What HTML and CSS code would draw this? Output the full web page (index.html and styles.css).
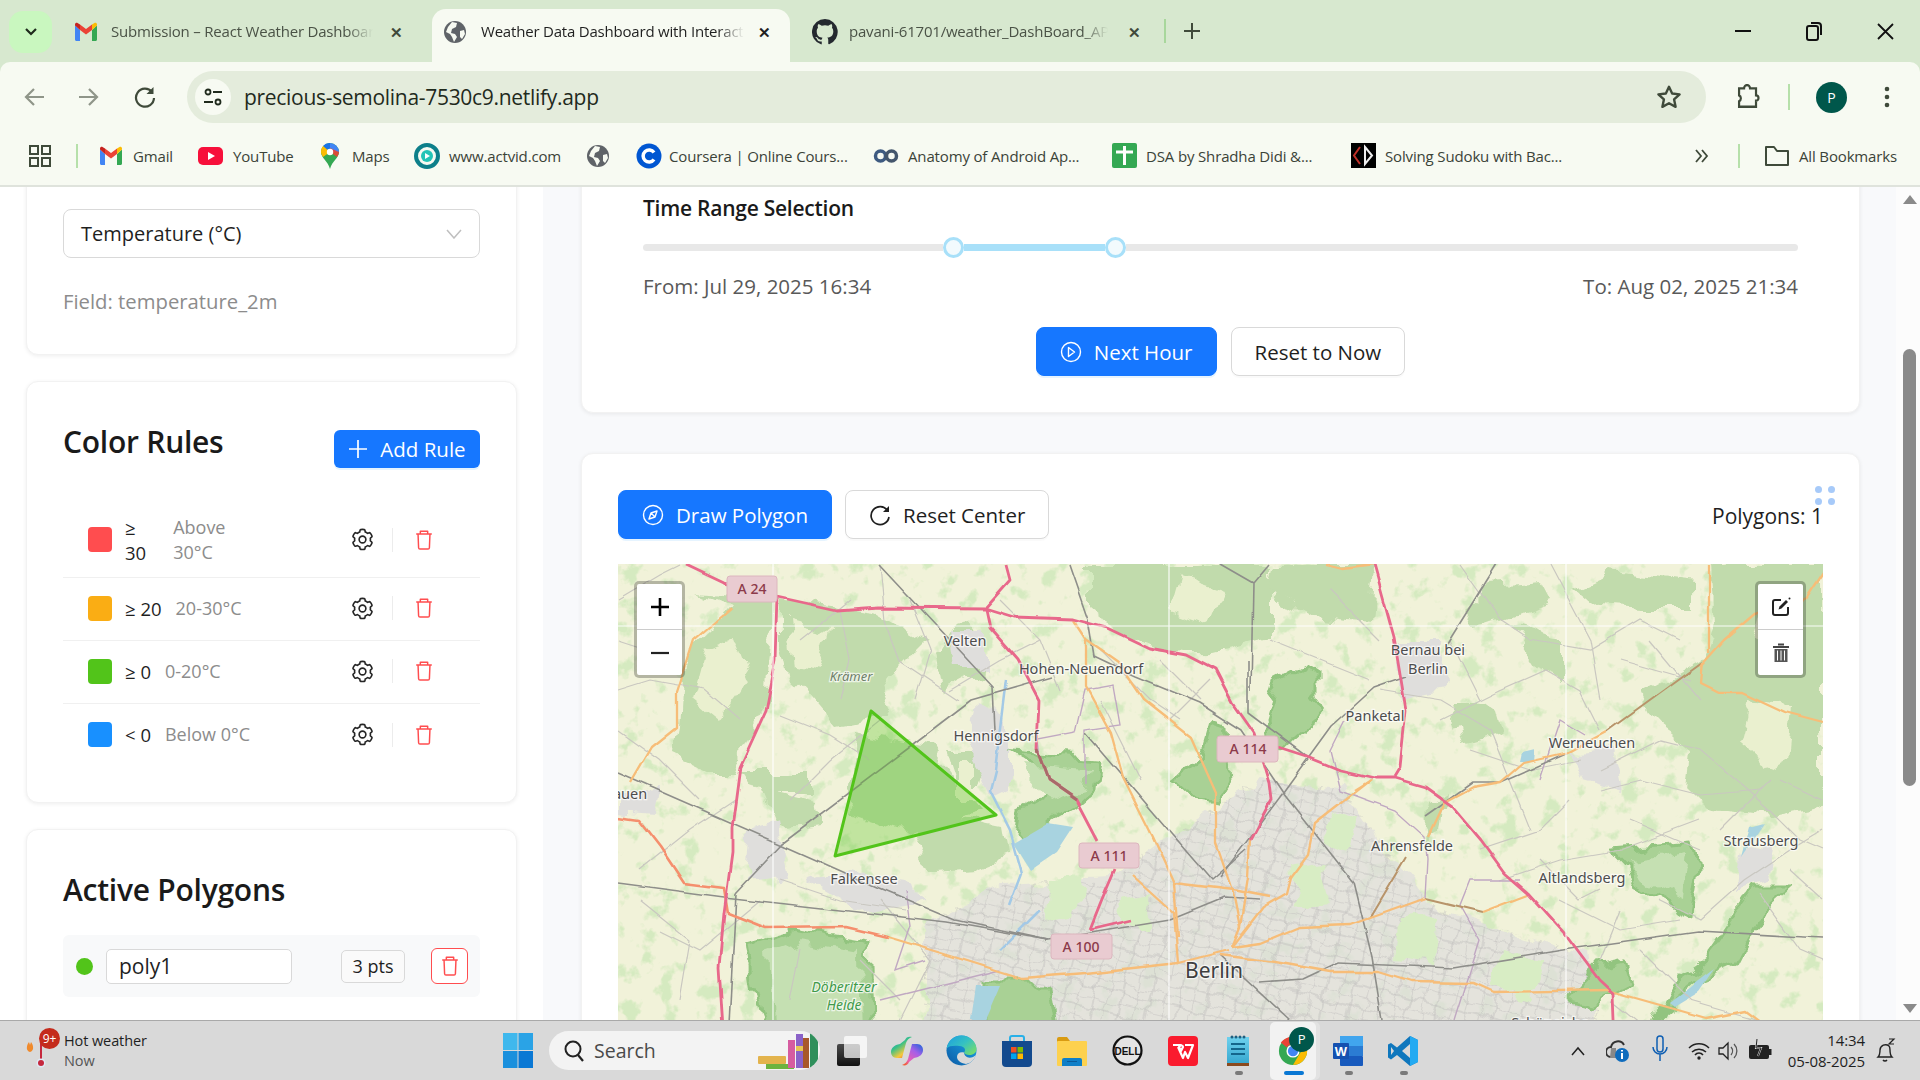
FILE: index.html
```html
<!DOCTYPE html>
<html lang="en">
<head>
    <meta charset="UTF-8">
    <meta name="viewport" content="width=device-width, initial-scale=1.0">
    <title>Weather Data Dashboard with Interactive Map</title>
    <link rel="stylesheet" href="styles.css">
</head>
<body>
    <!-- shared icons -->
    <svg class="icon-defs" aria-hidden="true">
        <symbol id="i-gear" viewBox="0 0 1024 1024">
            <path fill="none" stroke="currentColor" stroke-width="72" d="M924.8 625.7l-65.5-56c3.1-19 4.7-38.4 4.7-57.8s-1.6-38.8-4.7-57.8l65.5-56a32 32 0 0 0 9.3-35.2l-.9-2.6a443.7 443.7 0 0 0-79.7-137.9l-1.8-2.1a32.1 32.1 0 0 0-35.1-9.5l-81.3 28.9c-30-24.6-63.5-44-99.7-57.6l-15.7-85a32 32 0 0 0-25.8-25.7l-2.7-.5c-52.1-9.4-106.9-9.4-159 0l-2.7.5a32 32 0 0 0-25.8 25.7l-15.8 85.4a351.9 351.9 0 0 0-99 57.4l-81.9-29.1a32 32 0 0 0-35.1 9.5l-1.8 2.1a446 446 0 0 0-79.7 137.9l-.9 2.6c-4.5 12.5-.8 26.5 9.3 35.2l66.3 56.6c-3.1 18.8-4.6 38-4.6 57.1 0 19.2 1.5 38.4 4.6 57.1L99 625.5a32 32 0 0 0-9.3 35.2l.9 2.6c18.1 50.4 44.9 96.9 79.7 137.9l1.8 2.1a32.1 32.1 0 0 0 35.1 9.5l81.9-29.1c29.8 24.5 63.1 43.9 99 57.4l15.8 85.4a32 32 0 0 0 25.8 25.7l2.7.5a449.4 449.4 0 0 0 159 0l2.7-.5a32 32 0 0 0 25.8-25.7l15.7-85a350 350 0 0 0 99.7-57.6l81.3 28.9a32 32 0 0 0 35.1-9.5l1.8-2.1c34.8-41.1 61.6-87.5 79.7-137.9l.9-2.6c4.5-12.3.8-26.3-9.3-35z"/>
            <circle cx="512" cy="512" r="150" fill="none" stroke="currentColor" stroke-width="72"/>
        </symbol>
        <symbol id="i-trash" viewBox="0 0 24 24">
            <path fill="none" stroke="currentColor" stroke-width="1.6" stroke-linejoin="round" d="M3.5 5.5h17M8 5.5V2.5h8v3M5.5 5.5l.6 15a1.5 1.5 0 0 0 1.5 1.4h8.8a1.5 1.5 0 0 0 1.5-1.4l.6-15"/>
        </symbol>
        <symbol id="i-globe" viewBox="0 0 24 24">
            <circle cx="12" cy="12" r="11" fill="#5f6368"/>
            <path fill="#f7faf2" d="M9 2l5 1-1 4-4 2-1 4 4 1 2 3-3 5-2-5-2-3-4-2 2-5zM17 11l4-1 1 4-3 5-2-2z"/>
        </symbol>
        <symbol id="i-gmail" viewBox="0 0 24 24">
            <path fill="#4285f4" d="M1 5.5v14c0 .8.6 1.5 1.5 1.5H6V10z"/>
            <path fill="#34a853" d="M23 5.5v14c0 .8-.6 1.5-1.5 1.5H18V10z"/>
            <path fill="#ea4335" d="M6 10V4.5L12 9l6-4.5V10l-6 4.5z"/>
            <path fill="#fbbc04" d="M18 4.5l2.5-1.6c1-.6 2.5.1 2.5 1.6v1L18 10z"/>
            <path fill="#c5221f" d="M6 4.5L3.5 2.900C2.5 2.3 1 3 1 4.5v1L6 10z"/>
        </symbol>
    </svg>

    <div class="browser">
        <div class="tab-strip">
            <div class="tab-search"><svg width="14" height="10" viewBox="0 0 14 10"><path d="M2 2l5 5 5-5" fill="none" stroke="#1f2a1c" stroke-width="2.2"/></svg></div>
            <div class="tab tab-one">
                <svg class="tab-icon" width="24" height="24"><use href="#i-gmail"/></svg>
                <span class="tab-title">Submission – React Weather Dashboard</span>
                <span class="tab-close">✕</span>
            </div>
            <div class="tab tab-active">
                <svg class="tab-icon" width="24" height="24"><use href="#i-globe"/></svg>
                <span class="tab-title">Weather Data Dashboard with Interactive</span>
                <span class="tab-close">✕</span>
            </div>
            <div class="tab tab-three">
                <svg class="tab-icon" width="26" height="26" viewBox="0 0 16 16"><path fill="#24292f" d="M8 0a8 8 0 0 0-2.5 15.6c.4.1.5-.2.5-.4v-1.400c-2.2.5-2.7-1-2.7-1-.4-.9-.9-1.200-.9-1.200-.7-.5.1-.5.1-.5.8.1 1.200.8 1.200.8.7 1.200 1.900.9 2.300.7.1-.5.3-.9.5-1.100-1.800-.2-3.600-.9-3.600-4 0-.9.3-1.600.8-2.100-.1-.2-.4-1 .1-2.100 0 0 .7-.2 2.200.8a7.600 7.600 0 0 1 4 0c1.500-1 2.200-.8 2.200-.8.4 1.100.2 1.900.1 2.100.5.6.8 1.300.8 2.100 0 3.100-1.900 3.700-3.700 3.900.3.3.6.8.6 1.500v2.200c0 .2.1.5.6.4A8 8 0 0 0 8 0z"/></svg>
                <span class="tab-title">pavani-61701/weather_DashBoard_API</span>
                <span class="tab-close">✕</span>
            </div>
            <span class="tab-divider"></span>
            <svg class="tab-new" width="18" height="18" viewBox="0 0 18 18"><path d="M9 1v16M1 9h16" stroke="#3f4a3a" stroke-width="2"/></svg>
            <div class="window-btns">
                <svg width="16" height="16" viewBox="0 0 16 16"><path d="M0 8h16" stroke="#111" stroke-width="2"/></svg>
                <svg width="16" height="20" viewBox="0 0 16 20"><rect x="1" y="5" width="11" height="14" rx="2" fill="none" stroke="#111" stroke-width="2"/><path d="M5 2h7a3 3 0 0 1 3 3v9" fill="none" stroke="#111" stroke-width="2"/></svg>
                <svg width="17" height="17" viewBox="0 0 17 17"><path d="M1 1l15 15M16 1L1 16" stroke="#111" stroke-width="1.8"/></svg>
            </div>
        </div>

        <div class="toolbar">
            <svg class="nav-btn" width="22" height="20" viewBox="0 0 22 20"><path d="M21 10H3M11 2l-8 8 8 8" fill="none" stroke="#8f9589" stroke-width="2.2"/></svg>
            <svg class="nav-btn nav-forward" width="22" height="20" viewBox="0 0 22 20"><path d="M1 10h18M11 2l8 8-8 8" fill="none" stroke="#8f9589" stroke-width="2.2"/></svg>
            <svg class="nav-btn nav-reload" width="22" height="22" viewBox="0 0 22 22"><path d="M18 6a9 9 0 1 0 2 6" fill="none" stroke="#3f4a3a" stroke-width="2.2"/><path d="M19.5 1v7h-7" fill="#3f4a3a"/></svg>
            <div class="url-bar">
                <span class="site-info"><svg width="20" height="20" viewBox="0 0 20 20"><circle cx="5" cy="5" r="2.5" fill="none" stroke="#1f2a1c" stroke-width="1.8"/><path d="M10 5h9M1 15h9" stroke="#1f2a1c" stroke-width="1.8"/><circle cx="15" cy="15" r="2.5" fill="none" stroke="#1f2a1c" stroke-width="1.8"/></svg></span>
                <span class="url-text">precious-semolina-7530c9.netlify.app</span>
                <svg class="url-star" width="26" height="26" viewBox="0 0 24 24"><path d="M12 2.5l2.900 6.300 6.900.8-5.100 4.700 1.400 6.800-6.100-3.400-6.100 3.400 1.400-6.800-5.100-4.700 6.900-.8z" fill="none" stroke="#3f4a3a" stroke-width="2.2" stroke-linejoin="round"/></svg>
            </div>
            <svg class="ext-btn" width="26" height="26" viewBox="0 0 24 24"><path d="M3 4h5a3 3 0 0 1 6 0h6v6.5a2.5 2.5 0 0 1 0 5V21H3v-5a3 3 0 0 0 0-5.500z" transform="translate(1 0) scale(.92 1)" fill="none" stroke="#3f4a3a" stroke-width="2.2"/></svg>
            <span class="toolbar-divider"></span>
            <span class="avatar">P</span>
            <svg class="more-btn" width="6" height="24" viewBox="0 0 6 24"><circle cx="3" cy="4" r="2.3" fill="#3f4a3a"/><circle cx="3" cy="12" r="2.3" fill="#3f4a3a"/><circle cx="3" cy="20" r="2.3" fill="#3f4a3a"/></svg>
        </div>

        <div class="bookmarks">
            <svg class="bm-apps" width="24" height="24" viewBox="0 0 24 24"><g fill="none" stroke="#3f4a3a" stroke-width="2"><rect x="2" y="2" width="8" height="8"/><rect x="14" y="2" width="8" height="8"/><rect x="2" y="14" width="8" height="8"/><rect x="14" y="14" width="8" height="8"/></g></svg>
            <span class="bm-divider"></span>
            <div class="bm bm-gmail"><svg width="24" height="24"><use href="#i-gmail"/></svg><span>Gmail</span></div>
            <div class="bm bm-youtube"><svg width="25" height="24" viewBox="0 0 25 24"><rect y="3" width="25" height="18" rx="5" fill="#f70f3a"/><path d="M10 8l7 4-7 4z" fill="#fff"/></svg><span>YouTube</span></div>
            <div class="bm bm-maps"><svg width="20" height="26" viewBox="0 0 20 26"><path d="M10 0a9 9 0 0 1 9 9c0 6-7 9-9 17-2-8-9-11-9-17a9 9 0 0 1 9-9z" fill="#34a853"/><path d="M3 3a9 9 0 0 1 7-3v9z" fill="#1a73e8"/><path d="M10 0a9 9 0 0 1 9 9h-9z" fill="#4285f4"/><path d="M1 9a9 9 0 0 1 2-6l7 6-7 5c-1-2-2-3-2-5z" fill="#fbbc04"/><path d="M19 9c0 2-1 3-2 5l-7-5V5z" fill="#ea4335" opacity=".9"/><circle cx="10" cy="9" r="3.2" fill="#fff"/></svg><span>Maps</span></div>
            <div class="bm bm-actvid"><svg width="26" height="26" viewBox="0 0 26 26"><circle cx="13" cy="13" r="11" fill="none" stroke="#0d7f8a" stroke-width="4"/><circle cx="13" cy="13" r="6" fill="#24c4b6"/><path d="M11 10l5 3-5 3z" fill="#fff"/></svg><span>www.actvid.com</span></div>
            <div class="bm bm-globe"><svg width="24" height="24"><use href="#i-globe"/></svg></div>
            <div class="bm bm-coursera"><svg width="26" height="26" viewBox="0 0 26 26"><circle cx="13" cy="13" r="12.5" fill="#0056d2"/><path d="M18 9.5a6 6 0 1 0 0 7" fill="none" stroke="#fff" stroke-width="3.5"/></svg><span>Coursera | Online Cours...</span></div>
            <div class="bm bm-anatomy"><svg width="26" height="16" viewBox="0 0 26 16"><circle cx="7.5" cy="8" r="5" fill="none" stroke="#3d5a80" stroke-width="3.5"/><circle cx="18.5" cy="8" r="5" fill="none" stroke="#44566c" stroke-width="3.5"/></svg><span>Anatomy of Android Ap...</span></div>
            <div class="bm bm-dsa"><svg width="25" height="25" viewBox="0 0 25 25"><rect width="25" height="25" rx="2" fill="#34a853"/><path d="M12.5 3v19M4 9h17" stroke="#fff" stroke-width="3"/></svg><span>DSA by Shradha Didi &amp;...</span></div>
            <div class="bm bm-solving"><svg width="25" height="25" viewBox="0 0 25 25"><rect width="25" height="25" fill="#000"/><path d="M9 4l-6 8.5L9 21" fill="none" stroke="#c03028" stroke-width="2"/><path d="M14 4l7 8.5L14 21z" fill="none" stroke="#eee" stroke-width="2"/></svg><span>Solving Sudoku with Bac...</span></div>
            <svg class="bm-more" width="14" height="14" viewBox="0 0 14 14"><path d="M1 1l5 6-5 6M7 1l5 6-5 6" fill="none" stroke="#3f4a3a" stroke-width="1.8"/></svg>
            <span class="bm-divider bm-divider-end"></span>
            <div class="bm bm-all"><svg width="26" height="24" viewBox="0 0 26 24"><path d="M2 21V3h8l3 4h11v14z" fill="none" stroke="#3f4a3a" stroke-width="2" stroke-linejoin="round"/></svg><span>All Bookmarks</span></div>
        </div>
    </div>

    <div class="page">
        <aside class="sidebar">
            <section class="card card-layer">
                <div class="select-box">
                    <span>Temperature (°C)</span>
                    <svg width="16" height="10" viewBox="0 0 16 10"><path d="M1 1l7 8 7-8" fill="none" stroke="#bfbfbf" stroke-width="1.5"/></svg>
                </div>
                <p class="field-note">Field: temperature_2m</p>
            </section>

            <section class="card card-rules">
                <div class="rules-head">
                    <h2>Color Rules</h2>
                    <button class="btn-add"><svg width="20" height="20" viewBox="0 0 20 20"><path d="M10 1v18M1 10h18" stroke="#fff" stroke-width="1.7"/></svg>Add Rule</button>
                </div>
                <div class="rule-row rule-row-tall">
                    <span class="swatch swatch-red"></span>
                    <span class="rule-op rule-op-wrap">≥<br>30</span>
                    <span class="rule-label rule-label-wrap">Above<br>30°C</span>
                    <div class="rule-actions">
                        <svg class="act-gear" width="23" height="23"><use href="#i-gear"/></svg><span class="act-sep"></span><svg class="act-trash" width="22" height="22"><use href="#i-trash"/></svg>
                    </div>
                </div>
                <div class="rule-row">
                    <span class="swatch swatch-orange"></span>
                    <span class="rule-op">≥ 20</span>
                    <span class="rule-label">20-30°C</span>
                    <div class="rule-actions">
                        <svg class="act-gear" width="23" height="23"><use href="#i-gear"/></svg><span class="act-sep"></span><svg class="act-trash" width="22" height="22"><use href="#i-trash"/></svg>
                    </div>
                </div>
                <div class="rule-row">
                    <span class="swatch swatch-green"></span>
                    <span class="rule-op">≥ 0</span>
                    <span class="rule-label">0-20°C</span>
                    <div class="rule-actions">
                        <svg class="act-gear" width="23" height="23"><use href="#i-gear"/></svg><span class="act-sep"></span><svg class="act-trash" width="22" height="22"><use href="#i-trash"/></svg>
                    </div>
                </div>
                <div class="rule-row rule-row-last">
                    <span class="swatch swatch-blue"></span>
                    <span class="rule-op">&lt; 0</span>
                    <span class="rule-label">Below 0°C</span>
                    <div class="rule-actions">
                        <svg class="act-gear" width="23" height="23"><use href="#i-gear"/></svg><span class="act-sep"></span><svg class="act-trash" width="22" height="22"><use href="#i-trash"/></svg>
                    </div>
                </div>
            </section>

            <section class="card card-polys">
                <h2>Active Polygons</h2>
                <div class="poly-item">
                    <span class="poly-dot"></span>
                    <div class="poly-name">poly1</div>
                    <span class="poly-pts">3 pts</span>
                    <button class="poly-del"><svg width="22" height="22"><use href="#i-trash"/></svg></button>
                </div>
            </section>
        </aside>

        <main class="main">
            <section class="card card-time">
                <h3>Time Range Selection</h3>
                <div class="slider">
                    <span class="slider-left"></span>
                    <span class="slider-handle"></span>
                    <span class="slider-fill"></span>
                    <span class="slider-handle"></span>
                    <span class="slider-right"></span>
                </div>
                <div class="range-labels">
                    <span>From: Jul 29, 2025 16:34</span>
                    <span>To: Aug 02, 2025 21:34</span>
                </div>
                <div class="time-btns">
                    <button class="btn btn-primary"><svg width="22" height="22" viewBox="0 0 22 22"><circle cx="11" cy="11" r="9.5" fill="none" stroke="#fff" stroke-width="1.4"/><path d="M8.5 6.5l6 4.5-6 4.5z" fill="none" stroke="#fff" stroke-width="1.4" stroke-linejoin="round"/></svg>Next Hour</button>
                    <button class="btn">Reset to Now</button>
                </div>
            </section>

            <section class="card card-map">
                <div class="spin-dots"><i></i><i></i><i></i><i></i></div>
                <div class="map-tools">
                    <button class="btn btn-primary"><svg width="22" height="22" viewBox="0 0 22 22"><circle cx="11" cy="11" r="9.5" fill="none" stroke="#fff" stroke-width="1.4"/><path d="M15 7l-2 6-6 2 2-6zM9 9l4 4" fill="none" stroke="#fff" stroke-width="1.4" stroke-linejoin="round"/></svg>Draw Polygon</button>
                    <button class="btn"><svg width="22" height="22" viewBox="0 0 22 22"><path d="M18.5 6.5A9 9 0 1 0 20 13" fill="none" stroke="#1f1f1f" stroke-width="1.7"/><path d="M20 2v6h-6" fill="#1f1f1f"/></svg>Reset Center</button>
                    <span class="poly-count">Polygons: 1</span>
                </div>

                <div class="map">
                    <svg class="map-canvas" width="1205" height="480" viewBox="618 564 1205 480">
                        <defs>
                            <filter id="meadow" color-interpolation-filters="sRGB" x="0" y="0" width="100%" height="100%">
                                <feTurbulence type="fractalNoise" baseFrequency="0.05" numOctaves="4" seed="9"/>
                                <feColorMatrix values="0 0 0 0 0.8  0 0 0 0 0.91  0 0 0 0 0.72  7 0 0 0 -3.9"/>
                            </filter>
                            <filter id="wobble" color-interpolation-filters="sRGB" x="-5%" y="-5%" width="110%" height="110%">
                                <feTurbulence type="fractalNoise" baseFrequency="0.035" numOctaves="3" seed="4" result="n"/>
                                <feDisplacementMap in="SourceGraphic" in2="n" scale="24" xChannelSelector="R" yChannelSelector="G"/>
                                <feGaussianBlur stdDeviation="0.7"/>
                            </filter>
                            <filter id="wiggle" color-interpolation-filters="sRGB" x="-5%" y="-5%" width="110%" height="110%">
                                <feTurbulence type="fractalNoise" baseFrequency="0.025" numOctaves="2" seed="7" result="n"/>
                                <feDisplacementMap in="SourceGraphic" in2="n" scale="6" xChannelSelector="R" yChannelSelector="G"/>
                                <feGaussianBlur stdDeviation="0.55"/>
                            </filter>
                            <filter id="mesh" color-interpolation-filters="sRGB" x="-5%" y="-5%" width="110%" height="110%">
                                <feTurbulence type="fractalNoise" baseFrequency="0.06" numOctaves="2" seed="2" result="n"/>
                                <feDisplacementMap in="SourceGraphic" in2="n" scale="12" xChannelSelector="R" yChannelSelector="G"/>
                                <feGaussianBlur stdDeviation="0.5"/>
                            </filter>
                            <pattern id="streets" width="28" height="22" patternUnits="userSpaceOnUse" patternTransform="rotate(14)">
                                <path d="M0 0h28M0 11h28M0 0v22M14 0v22" stroke="#bebdbb" stroke-width="0.8" fill="none"/>
                            </pattern>
                        </defs>
                        <rect x="618" y="564" width="1205" height="480" fill="#f1f2d9"/>
                        <rect x="618" y="564" width="1205" height="480" filter="url(#meadow)" opacity=".75"/>

                        <!-- woods -->
                        <g fill="#c1dbac" filter="url(#wobble)">
                            <path d="M698 593L732 607 715 627 694 647 682 677 679 727 675 757 711 773 732 773 749 733 766 703 772 627 774 600z"/>
                            <path d="M783 600L879 613 926 640 896 670 879 693 888 717 837 727 808 693 791 677 783 643z"/>
                            <path d="M736 773H812V790H762L745 787z"/>
                            <path d="M762 787L816 800 820 823 778 827z"/>
                            <path d="M858 733L930 747 980 813 905 833 846 813z"/>
                            <path d="M959 617L985 637 980 673 942 693 934 657z"/>
                            <path d="M1086 565H1270V640L1216 653 1182 653 1140 643 1102 623 1086 610z"/>
                            <path d="M947 750H989L980 787H959z"/>
                            <path d="M930 813L1001 827 1006 857 980 867 930 870 913 840z"/>
                            <path d="M1702 660H1823V807L1773 817 1706 807 1686 787 1690 753 1659 727 1643 693z"/>
                            <path d="M1711 564H1823V660H1702L1715 620z"/>
                            <path d="M1488 587L1541 583 1550 600 1506 617 1470 623 1461 610z"/>
                            <path d="M1577 590L1613 573 1693 583 1693 610 1644 610 1599 607z"/>
                            <path d="M1510 623L1564 640 1564 683 1541 673z"/>
                            <path d="M1274 564H1376L1372 623 1309 617 1265 590z"/>
                            <path d="M1430 800L1445 790 1440 835 1425 840z"/>
                            <path d="M1450 700L1490 700 1500 735 1462 745z"/>
                        </g>
                        <!-- clearings -->
                        <g fill="#eaf0cf" filter="url(#wobble)">
                            <path d="M708 650L735 640 750 680 720 720 695 700z"/>
                            <path d="M790 620L830 630 820 670 795 665z"/>
                            <path d="M1180 575L1225 590 1210 625 1170 610z"/>
                            <path d="M1760 600L1800 610 1790 650 1750 640z"/>
                            <path d="M1750 700L1790 705 1785 760 1760 775 1740 740z"/>
                            <path d="M960 760L975 760 975 800 960 800z"/>
                        </g>
                        <!-- towns -->
                        <g fill="#dfdedc" filter="url(#wobble)">
                            <path d="M925 925L1000 885 1110 880 1180 830 1260 780 1345 790 1385 850 1430 905 1500 930 1590 955 1600 1044H925z" opacity=".75"/>
                            <path d="M840 870L900 880 930 900 860 910 810 880z"/>
                            <path d="M975 700L1010 720 1010 790 990 800 970 740z"/>
                            <path d="M950 630L985 630 985 665 955 665z"/>
                            <path d="M1395 640L1440 640 1445 690 1400 700z"/>
                            <path d="M1745 840L1775 845 1770 880 1735 890z"/>
                            <path d="M748 830L780 820 790 880 745 885z"/>
                            <path d="M618 790L660 785 655 815 618 812z"/>
                            <path d="M1570 750L1610 745 1620 790 1585 780z"/>
                        </g>
                        <g filter="url(#mesh)">
                            <path d="M925 925L1000 885 1110 880 1180 830 1260 780 1345 790 1385 850 1430 905 1500 930 1590 955 1600 1044H925z" fill="url(#streets)"/>
                        </g>
                        <g fill="#d8edc4" filter="url(#wobble)">
                            <path d="M1050 880L1085 878 1075 920 1045 925z"/>
                            <path d="M1120 900L1150 895 1145 925 1115 925z"/>
                            <path d="M1290 870L1320 865 1330 900 1295 905z"/>
                            <path d="M1400 920L1440 915 1435 960 1395 955z"/>
                            <path d="M1330 810L1360 820 1350 850 1320 840z"/>
                            <path d="M1500 950L1545 960 1530 1000 1490 990z"/>
                        </g>
                        <!-- reserves -->
                        <g fill="#a9d195" stroke="#92c47f" stroke-width="3" filter="url(#wobble)">
                            <path d="M1014 753L1098 760 1094 793 1077 807 1052 823 1031 857 1014 837 1018 810 1048 793 1043 773z"/>
                            <path d="M749 943L795 930 871 943 875 1044H766L753 977z"/>
                            <path d="M1275 683L1305 667 1315 673 1315 693 1327 710 1295 737 1271 760 1263 723z"/>
                            <path d="M1174 780L1200 760 1210 725 1225 730 1230 780 1215 800 1190 795z"/>
                            <path d="M1615 850L1694 843 1698 867 1690 917 1675 910 1639 890 1631 867z"/>
                            <path d="M1710 950L1754 887 1791 887 1765 910 1738 963 1698 980 1655 1017 1645 1044 1678 980 1706 960z"/>
                            <path d="M1568 1000L1600 965 1625 960 1630 985 1590 1005z"/>
                            <path d="M985 985L1050 985 1060 1044H985z"/>
                        </g>
                        <g fill="#c5e0b2" filter="url(#wobble)">
                            <path d="M770 952L800 942 860 952 862 1044H775z"/>
                            <path d="M1022 765L1090 770 1086 790 1050 800z"/>
                            <path d="M1630 860L1685 852 1680 900 1645 882z"/>
                        </g>
                        <!-- water -->
                        <g fill="#a8d3e0" filter="url(#wiggle)">
                            <path d="M1048 823L1073 827 1056 853 1031 870 1014 843z"/>
                            <path d="M1670 1003L1714 970 1698 993 1675 1007z"/>
                            <path d="M1750 827L1765 823 1742 857z"/>
                            <path d="M975 985L1000 985 985 1020H970z"/>
                            <path d="M1522 753L1535 750 1534 762 1520 762z"/>
                            <path class="river" d="M1006 680L995 770 990 790 1010 830 1022 873 1010 905M1040 910L1000 950"/>
                        </g>

                        <g filter="url(#wiggle)">
                            <!-- minor roads -->
                            <g class="road-minor">
                                <path d="M618 600L660 575 680 565M618 690L650 680 705 690 740 720"/>
                                <path d="M880 565L885 620 900 660 960 700"/>
                                <path d="M780 715L830 735 870 760M790 800L830 760 880 720"/>
                                <path d="M735 800L690 830 640 870M840 610L850 660 840 700"/>
                                <path d="M1000 600L1040 640 1060 690M1100 700L1140 780"/>
                                <path d="M1380 690L1440 700 1490 730 1510 780 1530 830M1270 640L1320 660 1370 680"/>
                                <path d="M1440 720L1500 690 1545 670 1580 690 1600 730"/>
                                <path d="M1600 770L1660 740 1700 750 1770 810 1800 840 1823 850M1600 790L1640 780 1700 795 1760 790"/>
                                <path d="M1500 880L1560 860 1620 850 1700 820M1540 860L1580 900 1600 890"/>
                                <path d="M1460 564L1500 620 1530 640 1590 650 1640 620 1680 640M1550 564L1590 640 1600 700"/>
                                <path d="M1660 900L1700 920 1745 880 1790 850 1823 830M1790 870L1823 900"/>
                                <path d="M1760 895L1800 950 1823 960M1620 910L1600 960"/>
                                <path d="M660 930L700 950 760 900M860 960L900 1000M1610 1000L1660 1040"/>
                                <path d="M618 640L680 660M618 730L660 760 700 800M640 900L690 940 680 1000M780 880L840 900 905 910"/>
                                <path d="M800 640L850 600M910 600L930 650 915 700M950 690L1000 660 1040 640"/>
                                <path d="M1100 650L1150 700 1180 720M1160 660L1200 700M1170 720L1210 680"/>
                                <path d="M1450 640L1480 700M1330 590L1380 640M1620 660L1690 680M1630 820L1700 850M1650 640L1700 700"/>
                                <path d="M1470 750L1530 770 1580 760M1480 850L1540 830 1570 800M1560 900L1620 930 1680 920"/>
                                <path d="M1720 830L1770 780M1780 780L1823 800M1640 950L1690 1000 1760 1020"/>
                                <path d="M800 950L790 1000M880 900L930 960 900 1020"/>
                            </g>
                            <path class="road-border" d="M1425 898L1427 860 1425 837 1395 810 1340 790 1330 750 1345 720M1585 735L1560 720 1540 780M1520 880L1470 880 1460 905 1480 940 1455 1020"/>
                            <path class="road-border" d="M1085 785V730L1120 725 1113 685 1085 690 1075 733 1038 740 1040 760M905 890L910 925 895 970 925 960M880 1000L1000 970"/>
                            <!-- rail and big roads -->
                            <g class="road-rail">
                                <path d="M618 773L778 843 879 888 955 920 1048 940"/>
                                <path d="M618 883L724 897 947 922 1048 940"/>
                                <path d="M736 893L783 843 913 745 972 700 1052 677"/>
                                <path d="M736 893L728 1044"/>
                                <path d="M879 565L993 687 995 730"/>
                                <path d="M1069 565L1088 620 1094 657 1136 677 1199 703 1241 730 1283 793 1354 883 1372 957 1386 1044"/>
                                <path d="M1086 733L1166 827 1212 880 1246 850"/>
                                <path d="M1220 877L1283 793 1331 727 1374 688 1406 677"/>
                                <path d="M1248 660V713L1307 757"/>
                                <path d="M1220 564L1253 583 1251 690M1269 564L1253 583"/>
                                <path d="M1425 817L1473 783 1501 783 1568 753"/>
                                <path d="M1339 963L1453 968 1576 948 1698 931 1823 938"/>
                                <path d="M1170 920L1224 898 1260 900M1048 940L1170 920"/>
                                <path d="M1260 983L1303 980 1339 963M1220 955L1290 1020"/>
                                <path d="M1497 564L1448 643"/>
                            </g>
                            <path class="road-brown" d="M1406 857L1370 917M1607 732L1702 663M1425 898L1483 912"/>
                            <g class="road-orange">
                                <path d="M732 607L694 640 677 693 677 727 652 747 631 783"/>
                                <path d="M888 937L964 960 1022 978 1086 973 1178 963 1229 950"/>
                                <path d="M1073 620L1086 640 1086 687 1111 733 1123 777 1153 837 1174 883 1178 937"/>
                                <path d="M1086 640L1119 663 1144 700 1191 737 1216 793 1216 843 1233 893 1240 927"/>
                                <path d="M1132 875L1174 913 1178 963M1174 883L1233 890 1270 897"/>
                                <path d="M1370 780L1315 823 1309 853 1291 877 1287 893 1263 907 1232 947"/>
                                <path d="M1250 840L1248 877 1240 927 1232 947"/>
                                <path d="M1232 947L1260 943 1299 927 1350 925 1425 898"/>
                                <path d="M1483 912L1528 895"/>
                                <path d="M1220 955L1275 962 1331 972 1378 972 1410 982 1473 983 1493 992 1607 990 1706 1018 1746 1010 1773 1030"/>
                                <path d="M1429 837L1445 803 1473 788 1501 783 1524 763 1568 753 1607 732"/>
                                <path d="M1702 663L1700 683 1718 692 1742 692 1785 712 1823 722"/>
                                <path d="M1709 564V653M1823 573L1805 600 1756 613 1724 640 1700 667"/>
                                <path d="M1327 564L1343 568 1374 564"/>
                                <path d="M1370 780L1354 790"/>
                            </g>
                            <path class="road-salmon" d="M618 817L639 820 660 847 684 883 724 888 728 913 766 928 846 927 888 937"/>
                            <g class="road-motor">
                                <path d="M686 565L724 583 778 597 837 610 879 607 985 608 1014 617 1073 619 1107 628 1149 648 1187 655 1216 670 1233 703 1254 733 1269 783 1271 800 1250 840"/>
                                <path d="M778 597L776 660 766 710 740 767 732 827 732 853 724 913 719 967 724 1044"/>
                                <path d="M985 608L1010 580 1006 565M985 608L989 627 1018 660 1039 700 1037 750 1048 780 1077 800 1098 840"/>
                                <path d="M1115 870L1102 900 1090 930M1090 930L1132 920"/>
                                <path d="M1374 564L1394 637 1406 710 1400 767 1394 777"/>
                                <path d="M1279 748L1307 757 1339 770 1374 778 1394 778 1425 787 1453 807 1481 840 1505 873 1528 893 1564 933 1599 980 1613 993 1615 1044"/>
                            </g>
                            <path class="road-motor road-tint" d="M1037 750L1048 780 1077 800"/>
                        </g>

                        <!-- drawn polygon -->
                        <path class="drawn-poly" d="M871 711L996 815 835 856z"/>

                        <!-- tile seams -->
                        <g stroke="#fff" stroke-width="1.2" opacity=".9">
                            <path d="M773 564V1044M1169 564V1044M1566 564V1044M618 626H1823"/>
                        </g>

                        <!-- shields -->
                        <g class="shield">
                            <rect x="727" y="576" width="50" height="26" rx="3"/><text x="752" y="594">A 24</text>
                            <rect x="1079" y="843" width="60" height="25" rx="3"/><text x="1109" y="861">A 111</text>
                            <rect x="1217" y="736" width="61" height="26" rx="3"/><text x="1248" y="754">A 114</text>
                            <rect x="1051" y="934" width="61" height="25" rx="3"/><text x="1081" y="952">A 100</text>
                        </g>

                        <!-- place names -->
                        <g class="place">
                            <text x="965" y="646">Velten</text>
                            <text x="1081" y="674">Hohen-Neuendorf</text>
                            <text x="996" y="741">Hennigsdorf</text>
                            <text x="864" y="884">Falkensee</text>
                            <text x="630" y="799">auen</text>
                            <text x="1428" y="655">Bernau bei</text>
                            <text x="1428" y="674">Berlin</text>
                            <text x="1375" y="721">Panketal</text>
                            <text x="1592" y="748">Werneuchen</text>
                            <text x="1412" y="851">Ahrensfelde</text>
                            <text x="1582" y="883">Altlandsberg</text>
                            <text x="1761" y="846">Strausberg</text>
                            <text x="1550" y="1028">Schöneiche</text>
                            <text class="place-big" x="1214" y="978">Berlin</text>
                            <text class="place-wood" x="851" y="681">Krämer</text>
                            <text class="place-green" x="844" y="992">Döberitzer</text>
                            <text class="place-green" x="844" y="1010">Heide</text>
                        </g>
                    </svg>

                    <div class="map-zoom">
                        <div class="map-ctl-btn"><svg width="18" height="18" viewBox="0 0 18 18"><path d="M9 0v18M0 9h18" stroke="#000" stroke-width="2.6"/></svg></div>
                        <div class="map-ctl-btn"><svg width="18" height="18" viewBox="0 0 18 18"><path d="M0 9h18" stroke="#222" stroke-width="2.2"/></svg></div>
                    </div>
                    <div class="map-draw">
                        <div class="map-ctl-btn"><svg width="20" height="20" viewBox="0 0 20 20"><path d="M10 3H4a2 2 0 0 0-2 2v11a2 2 0 0 0 2 2h11a2 2 0 0 0 2-2v-6" fill="none" stroke="#222" stroke-width="2"/><path d="M7.5 12.5l1-3L15 3l2 2-6.5 6.5z" fill="#222"/><circle cx="18.5" cy="1.5" r="1" fill="#222"/></svg></div>
                        <div class="map-ctl-btn"><svg width="18" height="20" viewBox="0 0 18 20"><path d="M6 1.500h6M1 4h16" stroke="#444" stroke-width="2"/><path d="M2.5 6h13v13h-13z" fill="#555"/><path d="M5.5 7.5v10M9 7.5v10M12.5 7.5v10" stroke="#fff" stroke-width="1"/></svg></div>
                    </div>
                </div>
            </section>
        </main>

        <div class="scrollbar">
            <span class="scroll-up"></span>
            <span class="scroll-thumb"></span>
            <span class="scroll-down"></span>
        </div>
    </div>

    <footer class="taskbar">
        <div class="weather">
            <svg class="weather-icon" width="34" height="46" viewBox="0 0 34 46"><path d="M5 14c-3 4-3 9 1 10 4-1 4-6 1-10l-1 3z" fill="#f08a2c"/><path d="M17 15v18" stroke="#c5283d" stroke-width="2"/><circle cx="17" cy="35" r="4.5" fill="#dfe9f5"/><circle cx="17" cy="35" r="3" fill="#c5283d"/></svg>
            <span class="weather-badge">9+</span>
            <div class="weather-text"><span>Hot weather</span><span class="weather-sub">Now</span></div>
        </div>

        <div class="task-center">
            <svg class="task-win" width="30" height="35" viewBox="0 0 30 35"><rect width="14.5" height="17" fill="#3fb8ed"/><rect x="15.5" width="14.5" height="17" fill="#2aa3e6"/><rect y="18" width="14.5" height="17" fill="#1a90dd"/><rect x="15.5" y="18" width="14.5" height="17" fill="#0a78d4"/></svg>
            <div class="task-search">
                <svg width="22" height="24" viewBox="0 0 22 24"><circle cx="10" cy="10" r="7.5" fill="none" stroke="#222" stroke-width="2"/><path d="M15 16l5 6" stroke="#222" stroke-width="2.2"/></svg>
                <span>Search</span>
                <svg class="task-books" width="64" height="38" viewBox="0 0 64 38"><rect x="2" y="24" width="28" height="8" rx="1" fill="#e3b34c"/><rect x="10" y="32" width="28" height="5" fill="#6cb33f"/><rect x="32" y="8" width="7" height="28" fill="#d65ca0"/><rect x="40" y="2" width="7" height="34" fill="#8a62c8"/><rect x="47" y="6" width="6" height="30" fill="#a8582a"/><rect x="54" y="0" width="8" height="36" fill="#2f8f5b"/><rect x="40" y="14" width="7" height="5" fill="#e6c552"/></svg>
            </div>
            <div class="task-apps">
                <svg width="30" height="30" viewBox="0 0 30 30"><defs><linearGradient id="tv-dark" x1="0" y1="0" x2="0" y2="1"><stop offset="0" stop-color="#4a4a4a"/><stop offset="1" stop-color="#111"/></linearGradient></defs><rect y="8" width="23" height="22" rx="2" fill="url(#tv-dark)"/><rect x="7" y="0" width="23" height="22" rx="2" fill="#fff" fill-opacity=".72"/></svg>
                <svg width="32" height="30" viewBox="0 0 32 30"><defs><linearGradient id="cp-left" x1="0" y1="0" x2=".7" y2="1"><stop offset="0" stop-color="#1c8fe8"/><stop offset=".45" stop-color="#38c088"/><stop offset=".8" stop-color="#f6c93c"/><stop offset="1" stop-color="#f0742f"/></linearGradient><linearGradient id="cp-right" x1="1" y1="0" x2=".2" y2="1"><stop offset="0" stop-color="#1667d9"/><stop offset=".4" stop-color="#a45fe8"/><stop offset=".8" stop-color="#ea5fb4"/><stop offset="1" stop-color="#f0603a"/></linearGradient></defs><path d="M21 1c-3-1-6 0-7 3L9 8C3 9 0 12 0 16c0 3 2 6 6 6h5l4-15c1-3 3-5 6-6z" fill="url(#cp-left)"/><path d="M11 29c3 1 6 0 7-3l5-4c6-1 9-4 9-8 0-3-2-6-6-6h-5l-4 15c-1 3-3 5-6 6z" fill="url(#cp-right)"/></svg>
                <svg width="31" height="31" viewBox="0 0 31 31"><defs><linearGradient id="ed-blue" x1="0" y1="1" x2=".8" y2=".1"><stop offset="0" stop-color="#0c59a4"/><stop offset="1" stop-color="#1aa0e2"/></linearGradient><linearGradient id="ed-green" x1="0" y1="0" x2="1" y2=".8"><stop offset="0" stop-color="#1b9de2"/><stop offset=".55" stop-color="#35c1c2"/><stop offset="1" stop-color="#76dc6c"/></linearGradient></defs><circle cx="15.5" cy="15.5" r="15" fill="url(#ed-blue)"/><path d="M.6 13.500C2 5.500 8 .5 15.500.5c8.500 0 15 6.500 15 13.500 0 3.500-3 6-7 6-3 0-5-1-5.500-2.500 2-2 1.500-6-4.500-6.500C7 10.500 3 11 .6 13.500z" fill="url(#ed-green)"/><path d="M18 17.500c-4-1-7 1-7 4.500 0 3 3 6 9 7 5-1 8-4 10-9-2 2-5 3-8 2.500-2-.5-4-2.500-4-5z" fill="#d9d9d9"/></svg>
                <svg width="30" height="32" viewBox="0 0 30 32"><path d="M8 7V3a2 2 0 0 1 2-2h10a2 2 0 0 1 2 2v4" fill="none" stroke="#29b0e8" stroke-width="2"/><path d="M0 6h30v22a4 4 0 0 1-4 4H4a4 4 0 0 1-4-4z" fill="#134a8e"/><rect x="9" y="12" width="5.500" height="5.500" fill="#f25022"/><rect x="15.500" y="12" width="5.500" height="5.500" fill="#7fba00"/><rect x="9" y="18.500" width="5.500" height="5.500" fill="#00a4ef"/><rect x="15.500" y="18.500" width="5.500" height="5.500" fill="#ffb900"/></svg>
                <svg width="30" height="30" viewBox="0 0 30 30"><path d="M0 3a2 2 0 0 1 2-2h8l3 4h15v8H0z" fill="#d99b12"/><rect y="5" width="30" height="25" rx="1" fill="#fdd14f"/><path d="M5 30v-6a2 2 0 0 1 2-2h16a2 2 0 0 1 2 2v6z" fill="#0f7fc8"/><path d="M10 25.500h10" stroke="#0a5a99" stroke-width="1"/></svg>
                <svg width="31" height="31" viewBox="0 0 31 31"><circle cx="15.5" cy="15.500" r="14" fill="#e4e4e4" stroke="#111" stroke-width="2.2"/><text class="dell-text" x="15.500" y="19.500">DELL</text></svg>
                <svg width="30" height="30" viewBox="0 0 30 30"><rect width="30" height="30" rx="4" fill="#fa1b2e"/><path d="M5 9h8l-2 2 2 4 2-4-1-2M17 9h8l-5 13-3-6-2 6-5-11" fill="none" stroke="#fff" stroke-width="2.2" stroke-linejoin="round"/></svg>
                <svg width="22" height="32" viewBox="0 0 22 32"><defs><linearGradient id="note-bg" x1="0" y1="0" x2="0" y2="1"><stop offset="0" stop-color="#6fd1ee"/><stop offset="1" stop-color="#37a8d0"/></linearGradient></defs><path d="M0 2h22v26H0z" fill="url(#note-bg)"/><rect y="28" width="22" height="3" fill="#8a4a1f"/><circle cx="5" cy="2" r="1.500" fill="#1f5f80"/><circle cx="9" cy="2" r="1.500" fill="#1f5f80"/><circle cx="13" cy="2" r="1.500" fill="#1f5f80"/><circle cx="17" cy="2" r="1.500" fill="#1f5f80"/><path d="M4 9h14M4 14h14M4 19h14" stroke="#14668c" stroke-width="2"/></svg>
                <div class="task-chrome">
                    <svg width="30" height="30" viewBox="0 0 32 32"><circle cx="16" cy="16" r="15" fill="#34a853"/><path d="M16 1a15 15 0 0 1 13 7.500H16a7.500 7.500 0 0 0-6.500 3.800L3 7A15 15 0 0 1 16 1z" fill="#ea4335"/><path d="M29 8.500A15 15 0 0 1 16 31l6.500-11.200a7.500 7.500 0 0 0 0-11.300z" fill="#fbbc04"/><circle cx="16" cy="16" r="7" fill="#fff"/><circle cx="16" cy="16" r="5.500" fill="#4285f4"/></svg>
                    <span class="chrome-badge">P</span>
                </div>
                <svg width="30" height="30" viewBox="0 0 30 30"><rect x="7" width="23" height="10" fill="#41a5ee"/><rect x="7" y="10" width="23" height="10" fill="#2b7cd3"/><rect x="7" y="20" width="23" height="10" rx="1" fill="#185abd"/><rect y="7" width="16" height="16" rx="1" fill="#1551b0"/><text class="word-text" x="8" y="19.500">W</text></svg>
                <svg width="30" height="32" viewBox="0 0 30 32"><path d="M22 1l8 4v22l-8 4-13-11-6 4.500-3-2v-13l3-1.500 6 4.500z" fill="#0f77bd"/><path d="M22 9l-8 7 8 7z" fill="#d9d9d9"/><path d="M22 1l8 4v22l-8 4z" fill="#23aaf2"/><path d="M3 12l3 4-3 4z" fill="#d9d9d9"/></svg>
            </div>
        </div>

        <div class="task-marks"><i class="mark-notes"></i><i class="mark-chrome"></i><i class="mark-word"></i><i class="mark-code"></i></div>

        <div class="tray">
            <svg class="tray-caret" width="16" height="10" viewBox="0 0 16 10"><path d="M2 9l6-7 6 7" fill="none" stroke="#222" stroke-width="1.5"/></svg>
            <svg class="tray-cloud" width="24" height="26" viewBox="0 0 24 26"><path d="M5 19a5 5 0 0 1 0-10 7 7 0 0 1 13-2" fill="none" stroke="#333" stroke-width="2"/><path d="M4 20h6V10H5z" fill="#888"/><circle cx="16" cy="17" r="7" fill="#0f6cbd"/><path d="M16 12v1.500M16 15v6" stroke="#fff" stroke-width="2"/></svg>
            <svg class="tray-mic" width="16" height="32" viewBox="0 0 16 32"><rect x="5" y="1" width="6" height="16" rx="3" fill="none" stroke="#0f5fb3" stroke-width="1.5"/><path d="M1 12a7 7 0 0 0 14 0M8 19v7" fill="none" stroke="#0f5fb3" stroke-width="1.5"/></svg>
            <svg class="tray-wifi" width="22" height="20" viewBox="0 0 22 20"><path d="M1 7a14 14 0 0 1 20 0M4 11a10 10 0 0 1 14 0M7 14a5 5 0 0 1 8 0" fill="none" stroke="#222" stroke-width="1.5"/><circle cx="11" cy="17" r="1.7" fill="#222"/></svg>
            <svg class="tray-sound" width="20" height="20" viewBox="0 0 20 20"><path d="M1 7h4l5-5v16l-5-5H1z" fill="none" stroke="#222" stroke-width="1.3"/><path d="M13 6a6 6 0 0 1 0 8M16 3a10 10 0 0 1 0 14" fill="none" stroke="#555" stroke-width="1.3"/></svg>
            <svg class="tray-batt" width="24" height="24" viewBox="0 0 24 24"><rect x="1" y="6" width="20" height="14" rx="2" fill="#222"/><rect x="21" y="10" width="2.500" height="6" fill="#222"/><path d="M9 0l-1 9h5l-3 8" fill="none" stroke="#d9d9d9" stroke-width="2"/><path d="M9 0l-1 9h5l-3 8" fill="none" stroke="#222" stroke-width="1"/></svg>
            <div class="clock"><span>14:34</span><span>05-08-2025</span></div>
            <svg class="tray-bell" width="22" height="26" viewBox="0 0 22 26"><path d="M3 19c2-2 2-4 2-7a5.500 5.500 0 0 1 9-4c1 1 1 3 1 4 0 3 0 5 2 7zM8 22a2.500 2.500 0 0 0 4 0" fill="none" stroke="#222" stroke-width="1.4"/><path d="M14 1h5l-5 5h5" fill="none" stroke="#222" stroke-width="1.2"/></svg>
        </div>
    </footer>
</body>
</html>
```

FILE: styles.css
```css
* {
    margin: 0;
    padding: 0;
    box-sizing: border-box;
}

html, body {
    width: 1920px;
    height: 1080px;
    overflow: hidden;
}

body {
    font-family: "Open Sans", "Noto Sans", sans-serif;
    color: #1f1f1f;
    display: flex;
    flex-direction: column;
}

button {
    font-family: inherit;
}

.icon-defs {
    display: none;
}

/* browser chrome */
.browser {
    height: 187px;
    flex: none;
    background: #d7e8cf;
}

.tab-strip {
    height: 62px;
    display: flex;
    align-items: center;
}

.tab-search {
    width: 43px;
    height: 42px;
    margin: 2px 0 0 9px;
    background: #c9f7bf;
    border-radius: 14px;
    display: flex;
    align-items: center;
    justify-content: center;
}

.tab {
    height: 53px;
    margin-top: 9px;
    display: flex;
    align-items: center;
    font-size: 15px;
    color: #4a5246;
    letter-spacing: -0.2px;
}

.tab-icon {
    flex: none;
    margin-top: -7px;
}

.tab-title {
    white-space: nowrap;
    overflow: hidden;
    -webkit-mask-image: linear-gradient(to right, #000 90%, transparent);
    mask-image: linear-gradient(to right, #000 90%, transparent);
    margin-top: -10px;
}

.tab-close {
    font-size: 15px;
    margin-top: -8px;
    color: #3f4a3a;
    font-weight: 700;
}

.tab-one {
    width: 380px;
    padding-left: 22px;
}

.tab-one .tab-title {
    width: 262px;
    margin-left: 13px;
}

.tab-one .tab-close {
    margin-left: 17px;
}

.tab-active {
    width: 358px;
    padding-left: 11px;
    background: #f7faf2;
    border-radius: 14px 14px 0 0;
    color: #1f1f1f;
}

.tab-active .tab-title {
    width: 263px;
    margin-left: 14px;
}

.tab-active .tab-close {
    margin-left: 14px;
    color: #1f1f1f;
}

.tab-three {
    width: 374px;
    padding-left: 22px;
}

.tab-three .tab-title {
    width: 259px;
    margin-left: 11px;
}

.tab-three .tab-close {
    margin-left: 20px;
}

.tab-divider {
    width: 2px;
    height: 24px;
    background: #a8d79c;
}

.tab-new {
    margin-left: 17px;
}

.window-btns {
    margin-left: auto;
    width: 185px;
    padding-right: 26px;
    display: flex;
    align-items: center;
    justify-content: space-between;
}

.toolbar {
    height: 70px;
    background: #f7faf2;
    border-radius: 10px 10px 0 0;
    display: flex;
    align-items: center;
    padding-left: 23px;
}

.nav-forward {
    margin-left: 33px;
}

.nav-reload {
    margin-left: 34px;
}

.url-bar {
    width: 1519px;
    height: 52px;
    margin-left: 31px;
    background: #e4ecdc;
    border-radius: 26px;
    display: flex;
    align-items: center;
    padding-left: 8px;
}

.site-info {
    width: 36px;
    height: 36px;
    background: #f7faf2;
    border-radius: 50%;
    display: flex;
    align-items: center;
    justify-content: center;
}

.url-text {
    font-size: 21px;
    margin-left: 13px;
    color: #1f2a1c;
    letter-spacing: -0.3px;
}

.url-star {
    margin-left: auto;
    margin-right: 24px;
}

.ext-btn {
    margin-left: 29px;
}

.toolbar-divider {
    width: 2px;
    height: 26px;
    margin-left: 27px;
    background: #b6e0aa;
}

.avatar {
    width: 31px;
    height: 31px;
    margin-left: 26px;
    border-radius: 50%;
    background: #00574b;
    color: #fff;
    font-size: 14px;
    display: flex;
    align-items: center;
    justify-content: center;
}

.more-btn {
    margin-left: 37px;
}

.bookmarks {
    height: 55px;
    background: #f7faf2;
    border-bottom: 2px solid #dfe3dc;
    display: flex;
    align-items: center;
    padding-left: 28px;
    padding-bottom: 6px;
    font-size: 15px;
    color: #3b4338;
    letter-spacing: -0.15px;
}

.bm-divider {
    width: 2px;
    height: 24px;
    margin-left: 24px;
    background: #b6e0aa;
}

.bm {
    display: flex;
    align-items: center;
    gap: 9px;
    white-space: nowrap;
    flex: none;
}

.bm-gmail { margin-left: 21px; width: 99px; gap: 10px; }
.bm-youtube { width: 122px; gap: 10px; }
.bm-maps { width: 94px; gap: 12px; }
.bm-actvid { width: 172px; }
.bm-globe { width: 50px; }
.bm-coursera { width: 237px; gap: 7px; }
.bm-anatomy { width: 239px; }
.bm-dsa { width: 239px; }
.bm-solving { width: 344px; }
.bm-divider-end { margin-left: 29px; }
.bm-all { margin-left: 24px; }

/* page */
.page {
    height: 833px;
    flex: none;
    display: flex;
    overflow: hidden;
    background: #f8f9fb;
}

.sidebar {
    width: 543px;
    flex: none;
    background: #fff;
    padding: 0 26px;
    display: flex;
    flex-direction: column;
    gap: 26px;
}

.card {
    background: #fff;
    border: 1px solid #f2f2f2;
    border-radius: 12px;
    box-shadow: 0 1px 4px rgba(0, 0, 0, 0.07);
    flex: none;
}

.card-layer {
    height: 188px;
    margin-top: -20px;
    padding: 41px 36px 0;
}

.select-box {
    height: 49px;
    border: 1px solid #d9d9d9;
    border-radius: 8px;
    display: flex;
    align-items: center;
    justify-content: space-between;
    padding: 0 17px;
    font-size: 20px;
}

.field-note {
    margin-top: 28px;
    font-size: 20.3px;
    line-height: 30px;
    color: #8c8c8c;
}

.card-rules {
    height: 422px;
    padding: 44px 36px 0;
}

.rules-head {
    height: 42px;
    margin-bottom: 36px;
    display: flex;
    justify-content: space-between;
}

h2 {
    font-size: 30px;
    line-height: 32px;
    font-weight: 600;
    color: #1a1a1a;
    letter-spacing: -0.25px;
}

.btn-add {
    width: 146px;
    height: 38px;
    margin-top: 4px;
    border: none;
    border-radius: 6px;
    background: #1677ff;
    color: #fff;
    font-size: 20.5px;
    display: flex;
    align-items: center;
    justify-content: center;
    gap: 12px;
    box-shadow: 0 2px 0 rgba(5, 145, 255, 0.1);
}

.rule-row {
    height: 63px;
    padding: 0 0 2px 25px;
    border-bottom: 1px solid #f0f0f0;
    display: flex;
    align-items: center;
    font-size: 18px;
}

.rule-row-tall {
    height: 74px;
}

.rule-row-last {
    border-bottom: none;
}

.swatch {
    width: 24px;
    height: 25px;
    border-radius: 4px;
    flex: none;
}

.swatch-red { background: #ff4d4f; }
.swatch-orange { background: #faad14; }
.swatch-green { background: #52c41a; }
.swatch-blue { background: #1890ff; }

.rule-op {
    margin-left: 13px;
    font-size: 18.5px;
    line-height: 25px;
    white-space: nowrap;
}

.rule-label {
    margin-left: 14px;
    color: #8c8c8c;
    line-height: 25px;
    white-space: nowrap;
}

.rule-label-wrap {
    margin-left: 27px;
}

.rule-actions {
    margin-left: auto;
    padding-right: 45px;
    display: flex;
    align-items: center;
}

.act-gear {
    color: #262626;
}

.act-sep {
    width: 1px;
    height: 24px;
    margin: 0 20px 0 18px;
    background: #ececec;
}

.act-trash {
    color: #ff4d4f;
}

.card-polys {
    height: 300px;
    padding: 44px 36px 0;
}

.poly-item {
    height: 62px;
    margin-top: 29px;
    background: #f8f9fa;
    border-radius: 6px;
    display: flex;
    align-items: center;
    padding-left: 13px;
}

.poly-dot {
    width: 17px;
    height: 17px;
    background: #52c41a;
    border-radius: 50%;
    flex: none;
}

.poly-name {
    width: 186px;
    height: 35px;
    margin-left: 13px;
    background: #fff;
    border: 1px solid #d9d9d9;
    border-radius: 5px;
    padding-left: 12px;
    font-size: 21px;
    line-height: 33px;
}

.poly-pts {
    width: 64px;
    height: 33px;
    margin-left: 49px;
    background: #fafafa;
    border: 1px solid #d9d9d9;
    border-radius: 5px;
    font-size: 18px;
    line-height: 31px;
    text-align: center;
}

.poly-del {
    width: 37px;
    height: 36px;
    margin-left: 26px;
    background: #fff;
    border: 1px solid #ff4d4f;
    border-radius: 6px;
    color: #ff4d4f;
    display: flex;
    align-items: center;
    justify-content: center;
}

.main {
    width: 1353px;
    flex: none;
    padding: 0 36px 0 38px;
    display: flex;
    flex-direction: column;
    gap: 40px;
}

.card-time {
    height: 246px;
    margin-top: -20px;
    padding: 26px 61px 0;
}

h3 {
    font-size: 21px;
    line-height: 28px;
    font-weight: 600;
    color: #1a1a1a;
    letter-spacing: -0.25px;
}

.slider {
    height: 21px;
    margin-top: 15px;
    display: flex;
    align-items: center;
}

.slider-left, .slider-right, .slider-fill {
    height: 7px;
    background: #e8e8e8;
}

.slider-left {
    width: 300px;
    border-radius: 4px 0 0 4px;
}

.slider-right {
    flex: 1;
    border-radius: 0 4px 4px 0;
}

.slider-fill {
    width: 141px;
    background: #a8e0f9;
}

.slider-handle {
    width: 21px;
    height: 21px;
    background: #f2fafd;
    border: 3px solid #a8e0f9;
    border-radius: 50%;
    flex: none;
}

.range-labels {
    margin-top: 13px;
    display: flex;
    justify-content: space-between;
    font-size: 20.5px;
    line-height: 30px;
    color: #595959;
}

.time-btns {
    margin-top: 26px;
    display: flex;
    justify-content: center;
    gap: 14px;
}

.btn {
    height: 49px;
    padding: 0 23px;
    background: #fff;
    border: 1px solid #d9d9d9;
    border-radius: 8px;
    color: #1f1f1f;
    font-size: 20.5px;
    display: inline-flex;
    align-items: center;
    gap: 12px;
    box-shadow: 0 2px 0 rgba(0, 0, 0, 0.02);
    white-space: nowrap;
}

.btn-primary {
    background: #1677ff;
    border-color: #1677ff;
    color: #fff;
    box-shadow: 0 2px 0 rgba(5, 145, 255, 0.1);
}

.card-map {
    flex: 1;
    padding: 36px 36px 0;
    position: relative;
}

.spin-dots {
    position: absolute;
    top: 32px;
    right: 24px;
    width: 20px;
    display: grid;
    grid-template-columns: 7px 7px;
    gap: 5px 6px;
}

.spin-dots i {
    height: 7px;
    background: #a7caf9;
    border-radius: 50%;
}

.map-tools {
    height: 49px;
    display: flex;
    align-items: center;
    gap: 13px;
}

.poly-count {
    margin-left: auto;
    font-size: 21px;
    color: #1f1f1f;
    padding-top: 2px;
}

.map {
    margin-top: 25px;
    height: 480px;
    position: relative;
    overflow: hidden;
}

.map-canvas {
    display: block;
}

.road-minor path {
    fill: none;
    stroke: #c9c7c0;
    stroke-width: 1.2;
}

.road-border {
    fill: none;
    stroke: #c0a8c2;
    stroke-width: 1.4;
}

.river {
    fill: none;
    stroke: #a3c9e6;
    stroke-width: 2.5;
}

.road-rail path {
    fill: none;
    stroke: #8e8e8a;
    stroke-width: 1.6;
    stroke-linejoin: round;
}

.road-brown {
    fill: none;
    stroke: #b8946a;
    stroke-width: 2;
}

.road-orange path {
    fill: none;
    stroke: #f7bd78;
    stroke-width: 2.3;
    stroke-linejoin: round;
}

.road-salmon {
    fill: none;
    stroke: #f58f6e;
    stroke-width: 2.6;
    stroke-linejoin: round;
}

.road-motor path, .road-motor {
    fill: none;
    stroke: #e8688b;
    stroke-width: 2.8;
    stroke-linejoin: round;
}

.road-tint {
    stroke: #a86a6a;
}

.drawn-poly {
    fill: #52c41a;
    fill-opacity: 0.3;
    stroke: #52c41a;
    stroke-width: 3;
    stroke-linejoin: round;
}

.shield rect {
    fill: #e9cbd1;
    stroke: #dcb6be;
    stroke-width: 1;
}

.shield text {
    font-family: "Noto Sans", sans-serif;
    font-size: 14px;
    font-weight: 500;
    fill: #8c3a4a;
    text-anchor: middle;
}

.place text {
    font-family: "Noto Sans", sans-serif;
    font-size: 14.5px;
    fill: #4d4d4d;
    text-anchor: middle;
    stroke: rgba(255, 255, 255, 0.7);
    stroke-width: 2.5px;
    paint-order: stroke;
}

.place .place-big {
    font-size: 21px;
    fill: #3f3f3f;
}

.place .place-wood {
    font-size: 13px;
    font-style: italic;
    fill: #6f806a;
}

.place .place-green {
    font-size: 14px;
    font-style: italic;
    fill: #3f9a4a;
}

.map-zoom, .map-draw {
    position: absolute;
    top: 17px;
    width: 51px;
    height: 97px;
    background: #fff;
    background-clip: padding-box;
    border: 3px solid rgba(0, 0, 0, 0.25);
    border-radius: 5px;
    display: flex;
    flex-direction: column;
}

.map-zoom {
    left: 16px;
}

.map-draw {
    right: 17px;
}

.map-ctl-btn {
    flex: 1;
    display: flex;
    align-items: center;
    justify-content: center;
}

.map-ctl-btn + .map-ctl-btn {
    border-top: 1px solid #ccc;
}

.scrollbar {
    width: 24px;
    flex: none;
    background: #fcfcfc;
    padding-left: 7px;
    display: flex;
    flex-direction: column;
}

.scroll-up, .scroll-down {
    width: 0;
    height: 0;
    border-left: 7px solid transparent;
    border-right: 7px solid transparent;
    flex: none;
}

.scroll-up {
    margin-top: 8px;
    border-bottom: 9px solid #8a8a8a;
}

.scroll-thumb {
    width: 13px;
    height: 437px;
    margin-top: 145px;
    background: #8a8a8a;
    border-radius: 7px;
    flex: none;
}

.scroll-down {
    margin-top: 218px;
    border-top: 9px solid #8a8a8a;
}

/* taskbar */
.taskbar {
    height: 60px;
    flex: none;
    background: #d9d9d9;
    border-top: 1px solid #a9a9a9;
    display: flex;
    align-items: center;
    position: relative;
}

.weather {
    width: 503px;
    height: 100%;
    flex: none;
    display: flex;
    align-items: center;
    padding-left: 24px;
    position: relative;
}

.weather-icon {
    flex: none;
}

.weather-badge {
    position: absolute;
    top: 7px;
    left: 39px;
    width: 21px;
    height: 21px;
    background: #c42b1c;
    color: #fff;
    font-size: 12px;
    line-height: 21px;
    text-align: center;
    border-radius: 50%;
}

.weather-text {
    margin-left: 6px;
    display: flex;
    flex-direction: column;
    font-size: 14.5px;
    line-height: 20px;
    letter-spacing: -0.1px;
    color: #1f1f1f;
}

.weather-sub {
    color: #555;
}

.task-center {
    display: flex;
    align-items: center;
    flex: none;
}

.task-win {
    flex: none;
}

.task-search {
    width: 271px;
    height: 39px;
    margin-left: 16px;
    background: #f3f3f3;
    border-radius: 20px;
    display: flex;
    align-items: center;
    padding-left: 14px;
    gap: 9px;
    font-size: 19.5px;
    color: #4a4a4a;
    overflow: hidden;
}

.task-books {
    margin-left: auto;
}

.task-apps {
    margin-left: 4px;
    display: grid;
    grid-auto-flow: column;
    grid-auto-columns: 55.2px;
    justify-items: center;
    align-items: center;
}

.dell-text {
    font-family: "Liberation Sans", sans-serif;
    font-size: 10px;
    font-weight: 700;
    fill: #111;
    text-anchor: middle;
}

.word-text {
    font-family: "Liberation Sans", sans-serif;
    font-size: 13px;
    font-weight: 700;
    fill: #fff;
    text-anchor: middle;
}

.task-chrome {
    width: 46px;
    height: 58px;
    background: #f2f2f2;
    border-radius: 5px;
    box-shadow: 4px 0 0 #e2e2e2;
    display: flex;
    align-items: center;
    justify-content: center;
    position: relative;
}

.chrome-badge {
    position: absolute;
    top: 5px;
    right: 2px;
    width: 25px;
    height: 25px;
    background: #00574b;
    color: #fff;
    font-size: 13px;
    line-height: 25px;
    text-align: center;
    border-radius: 50%;
}

.task-marks i {
    position: absolute;
    bottom: 5px;
    width: 8px;
    height: 4px;
    background: #7a7a7a;
    border-radius: 2px;
}

.task-marks .mark-notes { left: 1235px; }
.task-marks .mark-chrome { left: 1284px; width: 20px; background: #0a78d4; }
.task-marks .mark-word { left: 1345px; }
.task-marks .mark-code { left: 1400px; }

.tray {
    margin-left: auto;
    width: 353px;
    display: flex;
    align-items: center;
}

.tray-caret { margin-left: 3px; }
.tray-cloud { margin-left: 20px; }
.tray-mic { margin-left: 22px; }
.tray-wifi { margin-left: 20px; }
.tray-sound { margin-left: 8px; }
.tray-batt { margin-left: 10px; }

.clock {
    margin-left: auto;
    margin-right: 10px;
    display: flex;
    flex-direction: column;
    align-items: flex-end;
    font-size: 15px;
    line-height: 21px;
    letter-spacing: -0.1px;
    color: #1f1f1f;
}

.tray-bell {
    margin-right: 23px;
}
```
